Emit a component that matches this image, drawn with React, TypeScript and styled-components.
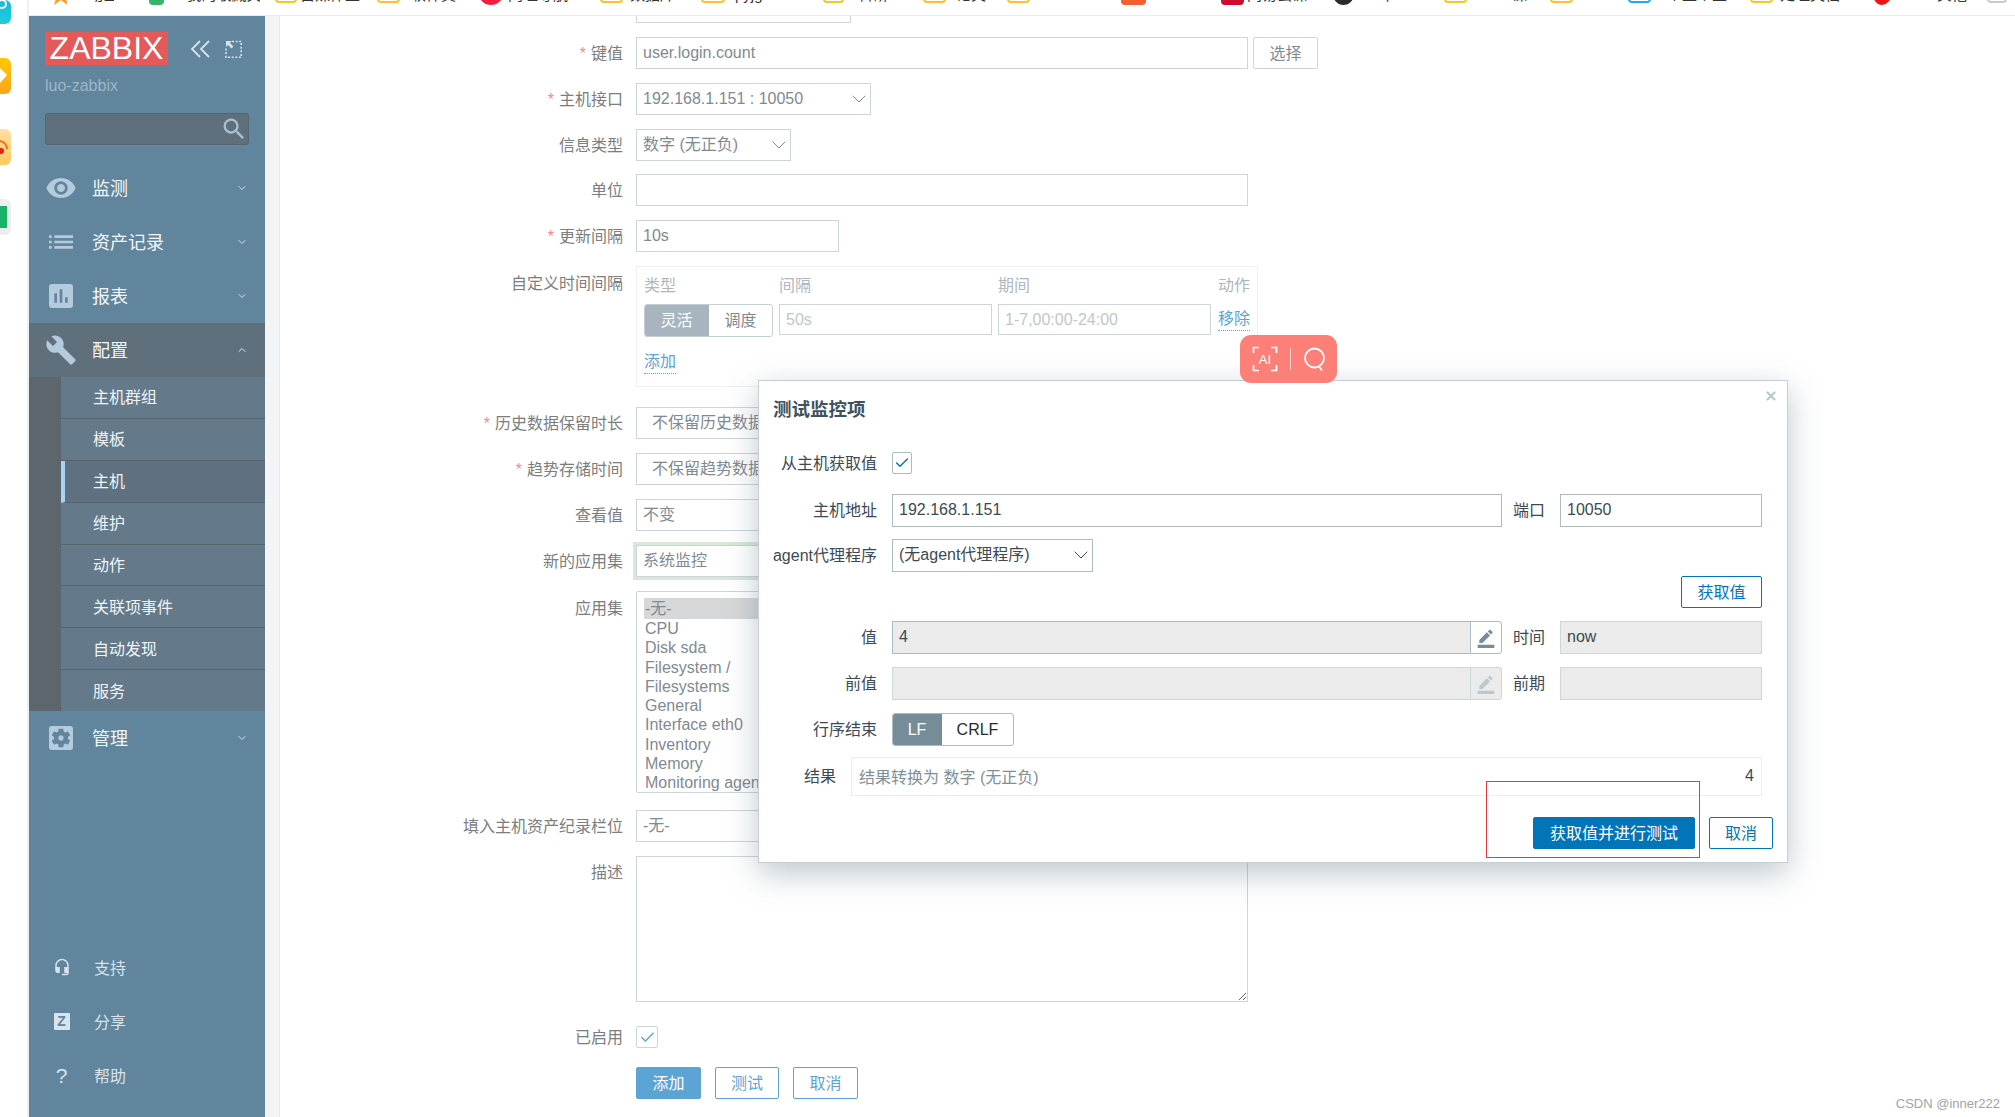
import React from 'react';
import styled, { createGlobalStyle } from 'styled-components';
import { ChevronDown, ChevronUp, Check, X } from 'lucide-react';
import {
  MdRemoveRedEye,
  MdList,
  MdAssessment,
  MdBuild,
  MdSettingsApplications,
  MdSearch,
  MdHeadsetMic,
  MdBorderColor,
} from 'react-icons/md';

const FONT = `"Liberation Sans", "Noto Sans CJK SC", sans-serif`;

const GlobalStyle = createGlobalStyle`
  html, body {
    margin: 0;
    padding: 0;
    background: #fff;
    overflow: hidden;
  }
  * {
    box-sizing: border-box;
  }
`;

const Page = styled.div`
  position: relative;
  width: 2015px;
  height: 1117px;
  overflow: hidden;
  display: flex;
  font-family: ${FONT};
  font-size: 16px;
  background: #fff;
`;

const Dock = styled.div`
  width: 29px;
  flex: none;
  border-right: 2px solid #f0f0f0;
  display: flex;
  flex-direction: column;
`;
const DockApp = styled.div<{ $top: number; $h: number; $bg: string }>`
  width: 11px;
  height: ${(p) => p.$h}px;
  margin-top: ${(p) => p.$top}px;
  background: ${(p) => p.$bg};
  border-radius: 0 6px 6px 0;
  overflow: hidden;
`;

const Desk = styled.div`
  flex: 1;
  min-width: 0;
  display: flex;
  flex-direction: column;
`;

/* clipped browser bookmark bar */
const TopBar = styled.div`
  height: 16px;
  flex: none;
  display: flex;
  border-bottom: 1px solid #ebebeb;
  overflow: hidden;
`;
const Mark = styled.div<{ $w: number; $left: number; $color: string; $kind: string }>`
  flex: none;
  width: ${(p) => p.$w}px;
  height: 22px;
  margin-left: ${(p) => p.$left}px;
  margin-top: ${(p) => (p.$kind === 'folder' ? -19 : -17)}px;
  border: 2px solid ${(p) => p.$color};
  background: ${(p) => (p.$kind === 'folder' ? '#fff' : p.$color)};
  border-radius: ${(p) => (p.$kind === 'dot' ? '50%' : '4px')};
`;
const MarkStar = styled.div<{ $w: number; $left: number; $color: string }>`
  flex: none;
  width: ${(p) => p.$w}px;
  margin-left: ${(p) => p.$left}px;
  margin-top: -15px;
  height: 20px;
  overflow: hidden;
  font-size: 24px;
  line-height: 20px;
  text-align: center;
  color: ${(p) => p.$color};
`;
const MarkText = styled.div<{ $w: number; $left: number }>`
  flex: none;
  width: ${(p) => p.$w}px;
  margin-left: ${(p) => p.$left}px;
  margin-top: -14px;
  height: 18px;
  line-height: 18px;
  font-size: 15px;
  color: #333;
  white-space: nowrap;
  overflow: hidden;
`;

const Body = styled.div`
  flex: 1;
  min-height: 0;
  display: flex;
`;

/* sidebar */
const Side = styled.aside`
  width: 236px;
  flex: none;
  background: #60859d;
  display: flex;
  flex-direction: column;
  color: #f0f4f7;
`;
const Brand = styled.div`
  display: flex;
  align-items: center;
  margin: 16px 0 0 16px;
  height: 33px;
`;
const Logo = styled.div`
  width: 123px;
  height: 33px;
  background: #e45959;
  color: #fff;
  font-size: 32px;
  line-height: 33px;
  text-align: center;
`;
const BrandTool = styled.svg<{ $left: number }>`
  margin-left: ${(p) => p.$left}px;
  flex: none;
`;
const ServerName = styled.div`
  margin: 10px 0 0 16px;
  height: 22px;
  line-height: 22px;
  color: #9db6c7;
`;
const SearchBox = styled.div`
  margin: 16px 16px 16px;
  height: 32px;
  background: #5f6f7c;
  border: 1px solid #566570;
  border-radius: 3px;
  display: flex;
  align-items: center;
  justify-content: flex-end;
  color: #a9c0d0;
  font-size: 28px;
`;
const MenuItem = styled.div<{ $active?: boolean }>`
  height: 54px;
  flex: none;
  display: flex;
  align-items: center;
  background: ${(p) => (p.$active ? '#5f6f7c' : 'transparent')};
  font-size: 18px;
  color: #f3f6f8;
`;
const MenuIcon = styled.span`
  width: 63px;
  padding-left: 16px;
  flex: none;
  display: flex;
  align-items: center;
  color: #b3cbdc;
  font-size: 32px;
`;
const MenuText = styled.span`
  flex: 1;
  padding-bottom: 3px;
`;
const MenuArrow = styled.span`
  width: 12px;
  margin-right: 17px;
  display: flex;
  color: #d6e2ea;
`;
const SubMenu = styled.div`
  height: 334px;
  flex: none;
  border-left: 32px solid #5c666c;
  background: #647a8b;
  display: flex;
  flex-direction: column;
`;
const SubItem = styled.div<{ $active?: boolean }>`
  flex: 1;
  display: flex;
  align-items: center;
  padding-left: ${(p) => (p.$active ? 28 : 32)}px;
  padding-bottom: 2px;
  border-left: ${(p) => (p.$active ? '4px solid #a9d4f5' : 'none')};
  border-bottom: 1px solid #56646e;
  background: ${(p) => (p.$active ? '#5f7180' : 'transparent')};
  color: #f0f4f7;
  &:last-child {
    border-bottom: none;
  }
`;
const BottomMenu = styled.div`
  margin-top: auto;
  margin-bottom: 14px;
`;
const BottomItem = styled.div`
  height: 54px;
  display: flex;
  align-items: center;
  padding-bottom: 2px;
  color: #d7e4ed;
`;
const BottomIcon = styled.span`
  width: 65px;
  flex: none;
  display: flex;
  justify-content: center;
  font-size: 18px;
`;
const ZBadge = styled.span`
  width: 16px;
  height: 17px;
  background: #d7e4ed;
  color: #60859d;
  font-size: 14px;
  font-weight: 700;
  line-height: 17px;
  text-align: center;
  border-radius: 1px;
`;
const QMark = styled.span`
  font-size: 21px;
  line-height: 21px;
`;

const Gutter = styled.div`
  width: 15px;
  flex: none;
  background: #f3f4f6;
  border-right: 1px solid #e8e9ea;
`;

/* background form */
const Main = styled.main`
  flex: 1;
  min-width: 0;
  display: flex;
  flex-direction: column;
  color: #7b7b7b;
`;
const Clipped = styled.div`
  width: 215px;
  height: 7px;
  margin-left: 356px;
  border: 1px solid #cdd4da;
  border-top: none;
  flex: none;
`;
const Row = styled.div<{ $top?: number; $start?: boolean }>`
  display: flex;
  gap: 13px;
  margin-top: ${(p) => p.$top ?? 14}px;
  align-items: ${(p) => (p.$start ? 'flex-start' : 'center')};
  flex: none;
`;
const Label = styled.div<{ $down?: number }>`
  width: 343px;
  flex: none;
  text-align: right;
  color: #7d7d7d;
  line-height: 20px;
  padding-top: ${(p) => p.$down ?? 2}px;
`;
const Star = styled.span`
  color: #ee8a8a;
  margin-right: 5px;
`;
const Field = styled.div<{ $w?: number; $pad?: number }>`
  width: ${(p) => p.$w ?? 612}px;
  height: 32px;
  flex: none;
  padding: 0 ${(p) => p.$pad ?? 6}px;
  border: 1px solid #cdd4da;
  color: #7f8a92;
  line-height: 28px;
  display: flex;
  align-items: center;
  justify-content: space-between;
  white-space: nowrap;
  overflow: hidden;
`;
const GlowField = styled(Field)`
  box-shadow: 0 0 0 3px #d7e9d8;
  overflow: visible;
`;
const Chevron = styled(ChevronDown)`
  flex: none;
  margin-right: -7px;
  color: #7f8a92;
`;
const DarkChevron = styled(Chevron)`
  color: #3c4a53;
`;
const PickButton = styled.div`
  width: 65px;
  height: 32px;
  margin-left: -8px;
  border: 1px solid #cdd4da;
  border-radius: 2px;
  text-align: center;
  line-height: 32px;
  color: #7f8a92;
`;

const IntervalBox = styled.div`
  width: 622px;
  height: 121px;
  border: 1px solid #eef1f3;
  padding: 9px 8px 0 7px;
  font-size: 16px;
`;
const IntervalGrid = styled.div`
  display: grid;
  grid-template-columns: 129px 213px 213px 33px;
  column-gap: 6px;
  row-gap: 8px;
  color: #aeb7bd;
  line-height: 20px;
  white-space: nowrap;
`;
const ActionHead = styled.span`
  text-align: right;
`;
const Segmented = styled.div<{ $w: number; $faded?: boolean }>`
  display: flex;
  width: ${(p) => p.$w}px;
  height: 33px;
  border: 1px solid ${(p) => (p.$faded ? '#c5ced4' : '#acbbc4')};
  border-radius: 3px;
  overflow: hidden;
  line-height: 31px;
  text-align: center;
  color: ${(p) => (p.$faded ? '#7f8a92' : '#1f2c33')};
`;
const SegmentOn = styled.div<{ $w: number; $bg: string }>`
  width: ${(p) => p.$w}px;
  margin: -1px 0 -1px -1px;
  background: ${(p) => p.$bg};
  color: #fff;
  line-height: 33px;
`;
const SegmentOff = styled.div`
  flex: 1;
`;
const GhostField = styled(Field)`
  width: auto;
  height: 31px;
  color: #c2c6c9;
`;
const TextLink = styled.span`
  color: #5ba4d3;
  border-bottom: 1px dotted #5ba4d3;
  line-height: 22px;
  justify-self: end;
  align-self: start;
  margin-top: 4px;
  width: fit-content;
`;
const AddLink = styled(TextLink)`
  display: block;
  justify-self: start;
  margin-top: 14px;
`;

const ListBox = styled.div`
  width: 340px;
  height: 202px;
  border: 1px solid #cdd4da;
  border-radius: 2px;
  padding: 6px 7px;
  overflow: hidden;
  color: #7f8a92;
  line-height: 19.3px;
`;
const ListOption = styled.div<{ $selected?: boolean }>`
  background: ${(p) => (p.$selected ? '#d6d7d8' : 'transparent')};
  padding-left: 1px;
  height: ${(p) => (p.$selected ? '21px' : '19.3px')};
  line-height: ${(p) => (p.$selected ? '21px' : '19.3px')};
  white-space: nowrap;
`;
const DescArea = styled.textarea`
  width: 612px;
  height: 146px;
  border: 1px solid #cdd4da;
  background: #fff;
  outline: none;
  border-radius: 0;
  display: block;
  resize: both;
`;
const CheckBox = styled.div<{ $w: number; $h: number; $border: string; $color: string }>`
  width: ${(p) => p.$w}px;
  height: ${(p) => p.$h}px;
  flex: none;
  border: 1px solid ${(p) => p.$border};
  border-radius: 2px;
  display: flex;
  align-items: center;
  justify-content: center;
  color: ${(p) => p.$color};
`;
const FormActions = styled.div`
  display: flex;
  gap: 14px;
`;
const Btn = styled.div<{ $w: number; $color: string; $solid?: boolean }>`
  width: ${(p) => p.$w}px;
  height: 32px;
  flex: none;
  border: 1px solid ${(p) => p.$color};
  border-radius: 2px;
  background: ${(p) => (p.$solid ? p.$color : '#fff')};
  color: ${(p) => (p.$solid ? '#fff' : p.$color)};
  text-align: center;
  line-height: 31px;
  white-space: nowrap;
`;

/* test dialog */
const Modal = styled.section`
  position: absolute;
  left: 758px;
  top: 380px;
  width: 1030px;
  height: 483px;
  background: #fff;
  border: 1px solid #c5d0d6;
  box-shadow: 0 10px 30px rgba(70, 95, 110, 0.35);
  color: #1f2c33;
  display: flex;
  flex-direction: column;
  padding-right: 25px;
`;
const ModalTitle = styled.h4`
  margin: 18px 0 0 14px;
  font-size: 18.5px;
  line-height: 22px;
  font-weight: 700;
  color: #3f525e;
`;
const CloseBtn = styled.span`
  position: absolute;
  right: 9px;
  top: 8px;
  color: #bcc8cf;
  display: flex;
`;
const ModalRow = styled.div<{ $top: number; $end?: boolean }>`
  display: flex;
  gap: 15px;
  align-items: center;
  margin-top: ${(p) => p.$top}px;
  justify-content: ${(p) => (p.$end ? 'flex-end' : 'flex-start')};
`;
const ModalLabel = styled.div<{ $w?: number }>`
  width: ${(p) => p.$w ?? 118}px;
  flex: none;
  text-align: right;
  line-height: 20px;
  padding-top: 1px;
  color: #3b4a54;
`;
const SideLabel = styled.div`
  width: 32px;
  flex: none;
  margin-left: -4px;
  line-height: 20px;
  padding-top: 1px;
  color: #3b4a54;
  white-space: nowrap;
`;
const ModalField = styled.div<{ $w: number; $off?: boolean; $pale?: boolean }>`
  width: ${(p) => p.$w}px;
  height: 33px;
  flex: none;
  padding: 0 6px 2px;
  background: ${(p) => (p.$off ? '#ebebeb' : '#fff')};
  border: 1px solid ${(p) => (p.$pale ? '#ced6da' : '#acbbc4')};
  color: #3c4a53;
  line-height: 28px;
  display: flex;
  align-items: center;
  justify-content: space-between;
  white-space: nowrap;
`;
const JoinedField = styled.div`
  display: flex;
  width: 610px;
  flex: none;
`;
const EditButton = styled.div<{ $pale?: boolean }>`
  width: 32px;
  height: 33px;
  flex: none;
  margin-left: -1px;
  border: 1px solid ${(p) => (p.$pale ? '#ced6da' : '#acbbc4')};
  border-radius: 0 3px 3px 0;
  background: ${(p) => (p.$pale ? '#ebebeb' : '#fff')};
  color: ${(p) => (p.$pale ? '#bcc8cf' : '#768d99')};
  display: flex;
  align-items: center;
  justify-content: center;
  font-size: 20px;
`;
const ResultBox = styled.div`
  flex: 1;
  height: 39px;
  padding: 0 7px 2px;
  border: 1px solid #ebeef0;
  display: flex;
  align-items: center;
  justify-content: space-between;
  color: #7f8f99;
`;
const ResultValue = styled.span`
  color: #3c4a53;
`;
const ModalActions = styled.div`
  display: flex;
  justify-content: flex-end;
  gap: 14px;
  margin-top: 21px;
  margin-right: -11px;
`;

/* overlays on the picture */
const OcrTool = styled.div`
  position: absolute;
  left: 1240px;
  top: 335px;
  width: 97px;
  height: 48px;
  border-radius: 11px;
  background: #fc7f78;
  display: flex;
  align-items: center;
  justify-content: center;
  gap: 12px;
  z-index: 2;
`;
const OcrDivider = styled.span`
  width: 1px;
  height: 22px;
  background: #ffd0cc;
`;
const RedFrame = styled.div`
  position: absolute;
  left: 1486px;
  top: 781px;
  width: 214px;
  height: 77px;
  border: 1px solid #e8393a;
  z-index: 3;
`;
const Watermark = styled.div`
  position: absolute;
  right: 15px;
  bottom: 6px;
  font-size: 13px;
  color: #a3a3a3;
`;

type Bookmark = {
  kind: 'star' | 'dot' | 'folder' | 'square' | 'text';
  x: number;
  w: number;
  color?: string;
  label?: string;
};

const YELLOW = '#ffc21f';

// x is the place on the whole screenshot; the bar itself starts at x = 29
const bookmarks: Bookmark[] = [
  { kind: 'star', x: 49, w: 18, color: '#ff9d1b' },
  { kind: 'text', x: 80, w: 34, label: '5动画' },
  { kind: 'square', x: 149, w: 15, color: '#35b36b' },
  { kind: 'text', x: 174, w: 86, label: '5 我的收藏夹' },
  { kind: 'folder', x: 275, w: 22, color: YELLOW },
  { kind: 'text', x: 300, w: 60, label: '自媒体工' },
  { kind: 'folder', x: 377, w: 23, color: YELLOW },
  { kind: 'text', x: 411, w: 50, label: '软件类' },
  { kind: 'dot', x: 479, w: 24, color: '#f2203e' },
  { kind: 'text', x: 508, w: 69, label: '网址导航' },
  { kind: 'folder', x: 600, w: 23, color: YELLOW },
  { kind: 'text', x: 630, w: 49, label: '数据库' },
  { kind: 'folder', x: 701, w: 24, color: YELLOW },
  { kind: 'text', x: 735, w: 70, label: 'pyjg' },
  { kind: 'folder', x: 823, w: 21, color: YELLOW },
  { kind: 'text', x: 858, w: 45, label: '科研' },
  { kind: 'folder', x: 923, w: 23, color: YELLOW },
  { kind: 'text', x: 956, w: 32, label: '论文' },
  { kind: 'folder', x: 1007, w: 23, color: YELLOW },
  { kind: 'square', x: 1121, w: 25, color: '#f45f2f' },
  { kind: 'square', x: 1221, w: 23, color: '#c8102e' },
  { kind: 'text', x: 1247, w: 63, label: '网易云课' },
  { kind: 'dot', x: 1333, w: 21, color: '#2a2a2a' },
  { kind: 'text', x: 1380, w: 16, label: '十' },
  { kind: 'folder', x: 1444, w: 23, color: YELLOW },
  { kind: 'text', x: 1512, w: 18, label: '课' },
  { kind: 'folder', x: 1550, w: 23, color: YELLOW },
  { kind: 'folder', x: 1628, w: 23, color: '#19aee8' },
  { kind: 'text', x: 1667, w: 63, label: '个主个业' },
  { kind: 'folder', x: 1750, w: 23, color: YELLOW },
  { kind: 'text', x: 1780, w: 67, label: '处理文档' },
  { kind: 'dot', x: 1873, w: 18, color: '#f01414' },
  { kind: 'text', x: 1937, w: 30, label: '其他' },
  { kind: 'folder', x: 1987, w: 20, color: '#c9c9c9' },
];

const CollapseIcon = () => (
  <BrandTool $left={22} width="20" height="18" viewBox="0 0 20 18" fill="none" stroke="#d7e2ea" strokeWidth="1.8">
    <polyline points="10,1 2,9 10,17" />
    <polyline points="19,1 11,9 19,17" />
  </BrandTool>
);

const ExpandIcon = () => (
  <BrandTool $left={15} width="17" height="18" viewBox="0 0 17 18" fill="none" stroke="#d7e2ea" strokeWidth="1.6">
    <path d="M7 1.5h9.2v15.7H1V8" strokeDasharray="2 1.6" />
    <path d="M1 1h6l-2 2 3.5 3.5-2 2L3 5 1 7z" fill="#d7e2ea" stroke="none" />
  </BrandTool>
);

const OcrIcon = () => (
  <svg width="26" height="26" viewBox="0 0 26 26" fill="none" stroke="#fff" strokeWidth="1.7">
    <path d="M7 1.5H1.5V7M19 1.5h5.5V7M1.5 19v5.5H7M24.5 19v5.5H19" />
    <text x="13" y="18" textAnchor="middle" fill="#fff" stroke="none" fontSize="13" fontFamily={FONT}>
      AI
    </text>
  </svg>
);

const LensIcon = () => (
  <svg width="23" height="26" viewBox="0 0 23 26" fill="none" stroke="#fff" strokeWidth="1.8">
    <circle cx="11.5" cy="12" r="9.5" />
    <path d="M16 20.5l3 4" />
  </svg>
);

const subItems = ['主机群组', '模板', '主机', '维护', '动作', '关联项事件', '自动发现', '服务'];
const listItems = [
  'CPU',
  'Disk sda',
  'Filesystem /',
  'Filesystems',
  'General',
  'Interface eth0',
  'Inventory',
  'Memory',
  'Monitoring agent',
];

const BookmarkBar = () => {
  let cursor = 29;
  return (
    <TopBar>
      {bookmarks.map((b) => {
        const left = b.x - cursor;
        cursor = b.x + b.w;
        if (b.kind === 'text') {
          return (
            <MarkText key={b.x} $w={b.w} $left={left}>
              {b.label}
            </MarkText>
          );
        }
        if (b.kind === 'star') {
          return (
            <MarkStar key={b.x} $w={b.w} $left={left} $color={b.color!}>
              ★
            </MarkStar>
          );
        }
        return <Mark key={b.x} $w={b.w} $left={left} $color={b.color!} $kind={b.kind} />;
      })}
    </TopBar>
  );
};

const App = () => {
  return (
    <Page>
      <GlobalStyle />
      <Dock>
        <DockApp $top={0} $h={24} $bg="linear-gradient(#18b8e0, #1cd0d8)">
          <svg width="11" height="24" fill="none" stroke="#fff" strokeWidth="2">
            <circle cx="2" cy="4" r="4" />
          </svg>
        </DockApp>
        <DockApp $top={34} $h={36} $bg="linear-gradient(#ffc800, #ffa41c)">
          <svg width="11" height="36" fill="#fff">
            <polygon points="0,10 7,17 0,25" />
          </svg>
        </DockApp>
        <DockApp $top={35} $h={36} $bg="linear-gradient(#ffe0a0, #ffc860)">
          <svg width="11" height="36" fill="none" stroke="#f07020" strokeWidth="2">
            <path d="M0 12a8 8 0 0 1 7 8" />
            <circle cx="1" cy="22" r="3" fill="#e8201c" stroke="none" />
          </svg>
        </DockApp>
        <DockApp $top={34} $h={36} $bg="#eeeeee">
          <svg width="11" height="36" fill="#18b368">
            <rect x="0" y="7" width="7" height="22" />
          </svg>
        </DockApp>
      </Dock>
      <Desk>
        <BookmarkBar />
        <Body>
          <Side>
            <Brand>
              <Logo>ZABBIX</Logo>
              <CollapseIcon />
              <ExpandIcon />
            </Brand>
            <ServerName>luo-zabbix</ServerName>
            <SearchBox>
              <MdSearch />
            </SearchBox>
            <MenuItem>
              <MenuIcon>
                <MdRemoveRedEye />
              </MenuIcon>
              <MenuText>监测</MenuText>
              <MenuArrow>
                <ChevronDown size={12} />
              </MenuArrow>
            </MenuItem>
            <MenuItem>
              <MenuIcon>
                <MdList />
              </MenuIcon>
              <MenuText>资产记录</MenuText>
              <MenuArrow>
                <ChevronDown size={12} />
              </MenuArrow>
            </MenuItem>
            <MenuItem>
              <MenuIcon>
                <MdAssessment />
              </MenuIcon>
              <MenuText>报表</MenuText>
              <MenuArrow>
                <ChevronDown size={12} />
              </MenuArrow>
            </MenuItem>
            <MenuItem $active>
              <MenuIcon>
                <MdBuild />
              </MenuIcon>
              <MenuText>配置</MenuText>
              <MenuArrow>
                <ChevronUp size={12} />
              </MenuArrow>
            </MenuItem>
            <SubMenu>
              {subItems.map((s) => (
                <SubItem key={s} $active={s === '主机'}>
                  {s}
                </SubItem>
              ))}
            </SubMenu>
            <MenuItem>
              <MenuIcon>
                <MdSettingsApplications />
              </MenuIcon>
              <MenuText>管理</MenuText>
              <MenuArrow>
                <ChevronDown size={12} />
              </MenuArrow>
            </MenuItem>
            <BottomMenu>
              <BottomItem>
                <BottomIcon>
                  <MdHeadsetMic />
                </BottomIcon>
                支持
              </BottomItem>
              <BottomItem>
                <BottomIcon>
                  <ZBadge>Z</ZBadge>
                </BottomIcon>
                分享
              </BottomItem>
              <BottomItem>
                <BottomIcon>
                  <QMark>?</QMark>
                </BottomIcon>
                帮助
              </BottomItem>
            </BottomMenu>
          </Side>
          <Gutter />
          <Main>
            <Clipped />
            <Row>
              <Label>
                <Star>*</Star>键值
              </Label>
              <Field>user.login.count</Field>
              <PickButton>选择</PickButton>
            </Row>
            <Row>
              <Label>
                <Star>*</Star>主机接口
              </Label>
              <Field $w={235}>
                192.168.1.151 : 10050
                <Chevron size={24} strokeWidth={1} />
              </Field>
            </Row>
            <Row>
              <Label>信息类型</Label>
              <Field $w={155}>
                数字 (无正负)
                <Chevron size={24} strokeWidth={1} />
              </Field>
            </Row>
            <Row $top={13}>
              <Label>单位</Label>
              <Field />
            </Row>
            <Row>
              <Label>
                <Star>*</Star>更新间隔
              </Label>
              <Field $w={203}>10s</Field>
            </Row>
            <Row $start>
              <Label $down={8}>自定义时间间隔</Label>
              <IntervalBox>
                <IntervalGrid>
                  <span>类型</span>
                  <span>间隔</span>
                  <span>期间</span>
                  <ActionHead>动作</ActionHead>
                  <Segmented $w={129} $faded>
                    <SegmentOn $w={65} $bg="#a8b5be">
                      灵活
                    </SegmentOn>
                    <SegmentOff>调度</SegmentOff>
                  </Segmented>
                  <GhostField>50s</GhostField>
                  <GhostField>1-7,00:00-24:00</GhostField>
                  <TextLink>移除</TextLink>
                </IntervalGrid>
                <AddLink>添加</AddLink>
              </IntervalBox>
            </Row>
            <Row $top={20}>
              <Label>
                <Star>*</Star>历史数据保留时长
              </Label>
              <Field $w={340} $pad={15}>
                不保留历史数据
              </Field>
            </Row>
            <Row>
              <Label>
                <Star>*</Star>趋势存储时间
              </Label>
              <Field $w={340} $pad={15}>
                不保留趋势数据
              </Field>
            </Row>
            <Row>
              <Label>查看值</Label>
              <Field $w={340}>不变</Field>
            </Row>
            <Row>
              <Label>新的应用集</Label>
              <GlowField $w={340}>系统监控</GlowField>
            </Row>
            <Row $start>
              <Label $down={8}>应用集</Label>
              <ListBox>
                <ListOption $selected>-无-</ListOption>
                {listItems.map((item) => (
                  <ListOption key={item}>{item}</ListOption>
                ))}
              </ListBox>
            </Row>
            <Row $top={17}>
              <Label>填入主机资产纪录栏位</Label>
              <Field $w={340}>-无-</Field>
            </Row>
            <Row $top={14} $start>
              <Label $down={7}>描述</Label>
              <DescArea readOnly />
            </Row>
            <Row $top={24}>
              <Label>已启用</Label>
              <CheckBox $w={22} $h={22} $border="#cdd4da" $color="#5ba4d3">
                <Check size={17} strokeWidth={2} />
              </CheckBox>
            </Row>
            <Row $top={19}>
              <Label />
              <FormActions>
                <Btn $w={65} $color="#5ba4d3" $solid>
                  添加
                </Btn>
                <Btn $w={64} $color="#5ba4d3">
                  测试
                </Btn>
                <Btn $w={65} $color="#5ba4d3">
                  取消
                </Btn>
              </FormActions>
            </Row>
          </Main>
        </Body>
      </Desk>

      <OcrTool>
        <OcrIcon />
        <OcrDivider />
        <LensIcon />
      </OcrTool>

      <Modal>
        <ModalTitle>测试监控项</ModalTitle>
        <CloseBtn>
          <X size={14} strokeWidth={4} />
        </CloseBtn>
        <ModalRow $top={31}>
          <ModalLabel>从主机获取值</ModalLabel>
          <CheckBox $w={20} $h={22} $border="#acbbc4" $color="#0275b8">
            <Check size={16} strokeWidth={2.2} />
          </CheckBox>
        </ModalRow>
        <ModalRow $top={20}>
          <ModalLabel>主机地址</ModalLabel>
          <ModalField $w={610}>192.168.1.151</ModalField>
          <SideLabel>端口</SideLabel>
          <ModalField $w={202}>10050</ModalField>
        </ModalRow>
        <ModalRow $top={12}>
          <ModalLabel>agent代理程序</ModalLabel>
          <ModalField $w={201}>
            (无agent代理程序)
            <DarkChevron size={24} strokeWidth={1} />
          </ModalField>
        </ModalRow>
        <ModalRow $top={4} $end>
          <Btn $w={81} $color="#0275b8">
            获取值
          </Btn>
        </ModalRow>
        <ModalRow $top={13}>
          <ModalLabel>值</ModalLabel>
          <JoinedField>
            <ModalField $w={579} $off>
              4
            </ModalField>
            <EditButton>
              <MdBorderColor />
            </EditButton>
          </JoinedField>
          <SideLabel>时间</SideLabel>
          <ModalField $w={202} $off $pale>
            now
          </ModalField>
        </ModalRow>
        <ModalRow $top={13}>
          <ModalLabel>前值</ModalLabel>
          <JoinedField>
            <ModalField $w={579} $off $pale />
            <EditButton $pale>
              <MdBorderColor />
            </EditButton>
          </JoinedField>
          <SideLabel>前期</SideLabel>
          <ModalField $w={202} $off $pale />
        </ModalRow>
        <ModalRow $top={13}>
          <ModalLabel>行序结束</ModalLabel>
          <Segmented $w={122}>
            <SegmentOn $w={50} $bg="#768d99">
              LF
            </SegmentOn>
            <SegmentOff>CRLF</SegmentOff>
          </Segmented>
        </ModalRow>
        <ModalRow $top={11}>
          <ModalLabel $w={77}>结果</ModalLabel>
          <ResultBox>
            结果转换为 数字 (无正负)
            <ResultValue>4</ResultValue>
          </ResultBox>
        </ModalRow>
        <ModalActions>
          <Btn $w={162} $color="#0275b8" $solid>
            获取值并进行测试
          </Btn>
          <Btn $w={64} $color="#0275b8">
            取消
          </Btn>
        </ModalActions>
      </Modal>

      <RedFrame />
      <Watermark>CSDN @inner222</Watermark>
    </Page>
  );
};

export default App;
